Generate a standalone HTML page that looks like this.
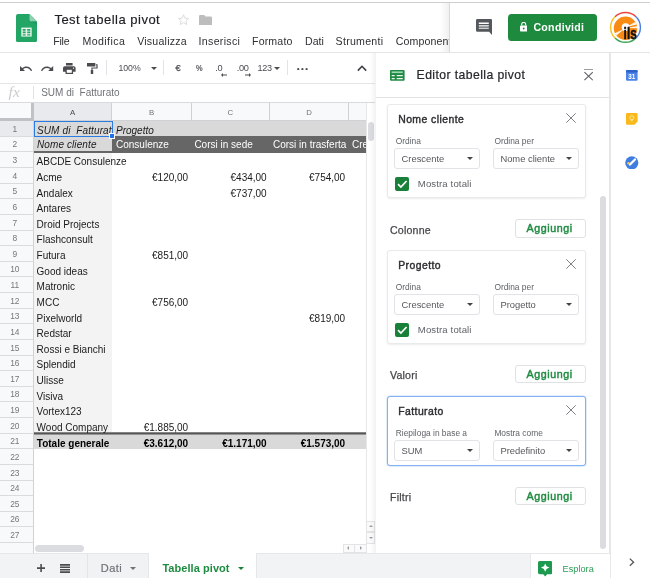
<!DOCTYPE html>
<html lang="it"><head><meta charset="utf-8"><title>Test tabella pivot</title>
<style>
*{box-sizing:border-box;margin:0;padding:0}
html,body{width:650px;height:578px;overflow:hidden;background:#fff}
body{position:relative;will-change:transform;font-family:"Liberation Sans",sans-serif;color:#202124;font-size:10px}
.abs,.rh,.ct,.ln{position:absolute}
.ln{background:#e3e4e6}
/* header */
#title{left:54.4px;top:12px;font-size:13px;line-height:16px;color:#202124;white-space:nowrap;letter-spacing:.5px;-webkit-text-stroke:.15px #202124}
.menu{top:34.6px;font-size:10.6px;line-height:12px;color:#2f3033;white-space:nowrap}
/* toolbar */
.tb{font-size:9px;line-height:10px;color:#4a4c50;white-space:nowrap}
/* grid */
.rh{left:0;width:33.5px;border-bottom:1px solid #d9dbde;border-right:1px solid #d0d2d5;color:#74777c;font-size:8.4px;text-align:center}
.rh span{position:absolute;left:0;right:2.8px;top:2.6px;line-height:10px}
.ch{top:103px;height:17.5px;background:#f8f9fa;border-right:1px solid #cfd1d4;border-bottom:1px solid #cfd1d4;color:#6f7277;font-size:7.8px;text-align:center;line-height:19.6px}
.ct{font-size:10px;line-height:13px;white-space:nowrap;color:#1a1a1a}
.ct.r{text-align:right}
.ct.i{font-style:italic}
.ct.b{font-weight:bold;color:#000}
.ct.w{color:#fff}
/* panel */
.card{left:387.4px;width:198.4px;height:93.6px;border:1px solid #e9eaec;border-radius:3px;background:#fff;box-shadow:0 1px 2px rgba(60,64,67,.10)}
.card b{position:absolute;left:9.8px;top:9px;font-size:10.4px;line-height:12px;color:#2c2d30;font-weight:normal;white-space:nowrap;letter-spacing:.45px;-webkit-text-stroke:.4px #2c2d30}
.lab{position:absolute;font-size:8.4px;line-height:10px;color:#5f6368;white-space:nowrap}
.sel{position:absolute;width:86.4px;height:21px;border:1px solid #e1e3e6;border-radius:3px;font-size:9.4px;line-height:19.6px;color:#55575b;padding-left:6.6px;white-space:nowrap}
.sel:after{content:"";position:absolute;right:6.4px;top:8px;border-left:3px solid transparent;border-right:3px solid transparent;border-top:3px solid #444}
.cb{position:absolute;left:6.4px;width:14.4px;height:14px;background:#188038;border-radius:2px}
.cbt{position:absolute;left:29.4px;font-size:9.6px;line-height:11px;color:#5f6368;white-space:nowrap;letter-spacing:.12px}
.x{position:absolute;right:9px;top:8.3px;width:10px;height:10px}
.sec{left:390px;font-size:10.6px;line-height:12px;color:#45474a;white-space:nowrap;letter-spacing:.2px;-webkit-text-stroke:.25px #45474a}
.add{left:515.2px;width:70.4px;height:18.6px;border:1px solid #dfe1e4;border-radius:3px;text-align:center;font-size:10.7px;line-height:17px;color:#1e8c40;font-weight:normal;letter-spacing:.55px;-webkit-text-stroke:.45px #1e8c40;white-space:nowrap;margin-top:-.5px;padding-right:1.6px}
</style></head><body>
<!-- top line -->
<div class="ln" style="left:0;top:2px;width:650px;height:1px;background:#cfcfcf"></div>
<!-- sheets logo -->
<svg class="abs" style="left:16px;top:13.8px" width="21" height="28.2" viewBox="0 0 21 28.2">
<path d="M2 0h11.5L21 7.5V26.2a2 2 0 0 1-2 2H2a2 2 0 0 1-2-2V2a2 2 0 0 1 2-2z" fill="#23a566"/>
<path d="M13.5 0L21 7.5h-5.5a2 2 0 0 1-2-2z" fill="#8ed1b1"/>
<path d="M21 7.5v4l-6-4.6z" fill="#1c8f55" opacity=".5"/>
<rect x="5.3" y="13.6" width="10.4" height="9" fill="#e6f4ec"/>
<path d="M6.7 15h3v1.7h-3zM11.2 15h3.1v1.7h-3.1zM6.7 17.6h3v1.7h-3zM11.2 17.6h3.1v1.7h-3.1zM6.7 20.2h3v1.3h-3zM11.2 20.2h3.1v1.3h-3.1z" fill="#23a566"/>
</svg>
<div id="title" class="abs">Test tabella pivot</div>
<!-- star -->
<svg class="abs" style="left:177.3px;top:12.6px" width="13" height="13" viewBox="0 0 24 24"><path d="M12 3.2l2.7 6.3 6.8.6-5.2 4.5 1.6 6.7L12 17.7l-5.9 3.6 1.6-6.7-5.2-4.5 6.8-.6z" fill="none" stroke="#dcdcdc" stroke-width="1.8" stroke-linejoin="round"/></svg>
<!-- folder -->
<svg class="abs" style="left:199px;top:14.6px" width="13" height="10.8" viewBox="0 0 13 10.8"><path d="M1.2 0h4l1.3 1.4h5.3a1.2 1.2 0 0 1 1.2 1.2v7a1.2 1.2 0 0 1-1.2 1.2H1.2A1.2 1.2 0 0 1 0 9.600V1.2A1.2 1.2 0 0 1 1.200 0z" fill="#bdbdbd"/></svg>
<div class="menu abs" style="left:53.2px;letter-spacing:-.22px">File</div>
<div class="menu abs" style="left:82.4px;letter-spacing:.42px">Modifica</div>
<div class="menu abs" style="left:137.2px;letter-spacing:.22px">Visualizza</div>
<div class="menu abs" style="left:198.6px;letter-spacing:.3px">Inserisci</div>
<div class="menu abs" style="left:252px;letter-spacing:.16px">Formato</div>
<div class="menu abs" style="left:305px">Dati</div>
<div class="menu abs" style="left:335.6px;letter-spacing:.27px">Strumenti</div>
<div class="menu abs" style="left:395.8px;width:53px;overflow:hidden;letter-spacing:.12px">Componenti aggiuntivi</div>
<!-- right header block -->
<div class="abs" style="left:440px;top:3px;width:9px;height:49px;background:linear-gradient(to right,rgba(0,0,0,0),rgba(0,0,0,.06))"></div>
<div class="abs" style="left:449px;top:3px;width:201px;height:49px;background:#fff;border-left:1px solid #dadada"></div>
<!-- comment icon -->
<svg class="abs" style="left:476px;top:19.200px" width="16.200" height="16.100" viewBox="0 0 16.200 15.400" preserveAspectRatio="none"><path d="M1.400 0h13.400a1.400 1.400 0 0 1 1.400 1.400V15.400l-3.100-3.100H1.400A1.400 1.400 0 0 1 0 10.900V1.400A1.400 1.400 0 0 1 1.400 0z" fill="#54575c"/><path d="M2.800 3.400h10v1.300h-10zM2.800 5.900h10v1.300h-10z" fill="#fff"/><path d="M2.800 8.200h10v1.400h-10z" fill="#cfd0d2"/></svg>
<!-- share -->
<div class="abs" style="left:508px;top:13.6px;width:89.4px;height:27.8px;background:#1d8a3e;border-radius:3.500px"></div>
<svg class="abs" style="left:519.600px;top:22.400px" width="7.400" height="9.600" viewBox="0 0 7.400 9.600"><path d="M1.700 3.600V2.400a2 2 0 0 1 4 0v1.200" fill="none" stroke="#fff" stroke-width="1.100"/><rect x="0" y="3.500" width="7.400" height="6" rx=".9" fill="#fff"/><circle cx="3.700" cy="6.500" r=".9" fill="#1d8a3e"/></svg>
<div class="abs" style="left:533.400px;top:21px;font-size:10.600px;line-height:13px;font-weight:bold;color:#fff;white-space:nowrap;letter-spacing:.3px">Condividi</div>
<!-- avatar -->
<svg class="abs" style="left:608.800px;top:11px" width="33" height="33" viewBox="0 0 33 33">
<defs><clipPath id="avc"><circle cx="16.500" cy="17.200" r="11.700"/></clipPath></defs>
<circle cx="16.500" cy="16.400" r="14.900" fill="#fff"/>
<path d="M5.960 5.860A14.900 14.900 0 0 1 27.040 5.860" fill="none" stroke="#e8453c" stroke-width="1.400"/>
<path d="M27.040 5.860A14.900 14.900 0 0 1 27.040 26.940" fill="none" stroke="#4a7fe0" stroke-width="1.400"/>
<path d="M27.040 26.940A14.900 14.900 0 0 1 5.960 26.940" fill="none" stroke="#3ea856" stroke-width="1.400"/>
<path d="M5.960 26.940A14.900 14.900 0 0 1 5.960 5.860" fill="none" stroke="#f6c026" stroke-width="1.400"/>
<circle cx="16.500" cy="17.200" r="11.700" fill="#f98b14"/>
<g clip-path="url(#avc)"><path d="M17 16l12-6.500 1.500 3.500zM17 17l13-2.200.3 2.500zM16 17.500L4 23l1.500 3z" fill="#fff" opacity=".9"/></g>
<circle cx="16.600" cy="16.200" r="3.900" fill="#fff"/>
<rect x="14" y="19" width="14" height="9.500" fill="#fff" opacity=".0"/>
<text x="14.600" y="27.900" font-family="Liberation Sans, sans-serif" font-weight="bold" font-size="17.400" fill="#111" stroke="#111" stroke-width=".5" textLength="13.200" lengthAdjust="spacingAndGlyphs">ils</text>
</svg>
<!-- header bottom line -->
<div class="ln" style="left:0;top:52px;width:650px;height:1px;background:#e4e5e7"></div>

<!-- toolbar icons -->
<svg class="abs" style="left:19.800px;top:65.600px" width="12.200" height="6.800" viewBox="0 0 12.200 6.800"><path d="M0 0v5h5L3.100 3.100C4 2.300 5.200 1.900 6.400 1.900c2.100 0 3.900 1.300 4.500 3.200l1.300-.4C11.400 2.200 9.100.500 6.400.500c-1.600 0-3.100.600-4.300 1.600z" fill="#4a4c50"/></svg>
<svg class="abs" style="left:41.400px;top:65.600px" width="12.200" height="6.800" viewBox="0 0 12.200 6.800"><path d="M12.200 0v5h-5l1.900-1.900C8.200 2.300 7 1.900 5.800 1.900c-2.100 0-3.900 1.300-4.500 3.200L0 4.700C.8 2.200 3.100.500 5.800.500c1.600 0 3.100.600 4.300 1.600z" fill="#4a4c50"/></svg>
<svg class="abs" style="left:63.400px;top:63.400px" width="12.600" height="11" viewBox="0 0 12.600 11"><path d="M3 0h6.600v2.400H3zM1.900 3.200h8.800a1.900 1.900 0 0 1 1.900 1.900v3.700h-2.500V11H2.500V8.800H0V5.100a1.900 1.900 0 0 1 1.900-1.900z" fill="#4a4c50"/><rect x="3.800" y="6.800" width="5" height="3" fill="#fff"/><circle cx="10.500" cy="5.200" r=".6" fill="#fff"/></svg>
<svg class="abs" style="left:87px;top:63.400px" width="10.600" height="11" viewBox="0 0 10.600 11"><path d="M0 0h8.300v3.600H0zM8.800 1.200h1.800v4.400H5.500v1.300h.7V11H3.800V6.900h.600V4.500h5V2.300h-.600z" fill="#4a4c50"/></svg>
<div class="ln" style="left:106.200px;top:60px;width:1px;height:15px;background:#e2e3e5"></div>
<div class="tb abs" style="left:118.400px;top:63px;font-size:8.700px">100%</div>
<div class="abs" style="left:150.600px;top:67px;border-left:3px solid transparent;border-right:3px solid transparent;border-top:3.400px solid #4a4c50"></div>
<div class="ln" style="left:163.200px;top:60px;width:1px;height:15px;background:#e2e3e5"></div>
<div class="tb abs" style="left:175.600px;top:63px;font-size:9.300px;color:#4a4c50;-webkit-text-stroke:.25px #4a4c50">€</div>
<div class="tb abs" style="left:196.200px;top:63px;font-size:8.400px;-webkit-text-stroke:.2px #4a4c50;transform:scaleX(.88);transform-origin:0 0">%</div>
<div class="tb abs" style="left:215.200px;top:63.400px;font-size:9.200px;letter-spacing:-.2px">.0</div>
<svg class="abs" style="left:221.400px;top:72.600px" width="6" height="4" viewBox="0 0 6 4"><path d="M0 2l2-2v1.400h4v1.200H2V4z" fill="#4a4c50"/></svg>
<div class="tb abs" style="left:236.800px;top:63.400px;font-size:9.200px;letter-spacing:-.35px">.00</div>
<svg class="abs" style="left:244.600px;top:72.600px" width="6" height="4" viewBox="0 0 6 4"><path d="M6 2L4 0v1.400H0v1.200h4V4z" fill="#4a4c50"/></svg>
<div class="tb abs" style="left:257.600px;top:63.400px;font-size:9.100px;letter-spacing:-.4px">123</div>
<div class="abs" style="left:273.600px;top:67.400px;border-left:3px solid transparent;border-right:3px solid transparent;border-top:3.400px solid #4a4c50"></div>
<div class="ln" style="left:287px;top:60px;width:1px;height:15px;background:#e2e3e5"></div>
<svg class="abs" style="left:297px;top:68px" width="11" height="2.400" viewBox="0 0 11 2.400"><circle cx="1.200" cy="1.200" r="1.100" fill="#4a4c50"/><circle cx="5.400" cy="1.200" r="1.100" fill="#4a4c50"/><circle cx="9.600" cy="1.200" r="1.100" fill="#4a4c50"/></svg>
<svg class="abs" style="left:356.600px;top:65.400px" width="10" height="6.400" viewBox="0 0 10 6.400"><path d="M.8 5.600L5 1.300l4.200 4.300" fill="none" stroke="#3c3e42" stroke-width="1.600"/></svg>
<!-- toolbar bottom line -->
<div class="ln" style="left:0;top:83px;width:375px;height:1px;background:#e4e5e7"></div>
<!-- formula bar -->
<div class="abs" style="left:8.600px;top:84px;font-family:'Liberation Serif',serif;font-style:italic;font-size:15.500px;line-height:16px;color:#c9cbce;letter-spacing:.2px">fx</div>
<div class="ln" style="left:33px;top:86px;width:1px;height:13px;background:#e0e1e3"></div>
<div class="abs" style="left:41.200px;top:87.400px;font-size:10px;line-height:12px;color:#707377;white-space:pre;letter-spacing:0">SUM di  Fatturato</div>
<div class="ln" style="left:0;top:101.500px;width:375px;height:1px;background:#d9dadc"></div>

<!-- column headers -->
<div class="abs" style="left:0;top:102.500px;width:366.500px;height:18px;background:#f8f9fa"></div>
<div class="abs" style="left:0;top:102.500px;width:33.800px;height:18.200px;background:#f9fafb;border-right:3px solid #bfc1c4;border-bottom:3px solid #bfc1c4"></div>
<div class="ch abs" style="left:33.600px;width:78.800px;background:#e8eaed;color:#4a4d51">A</div>
<div class="ch abs" style="left:112.400px;width:79.200px">B</div>
<div class="ch abs" style="left:191.600px;width:78.600px">C</div>
<div class="ch abs" style="left:270.200px;width:78.600px">D</div>
<div class="ch abs" style="left:348.800px;width:17.800px"></div>
<div class="abs" style="left:0;top:543px;width:33.500px;height:11px;background:#f8f9fa;border-right:1px solid #d0d2d5"></div>
<!-- cell fills -->
<div class="abs" style="left:33.600px;top:121px;width:333px;height:15.200px;background:#d9d9d9"></div>
<div class="abs" style="left:33.600px;top:136.200px;width:78.800px;height:16.800px;background:#d9d9d9"></div>
<div class="abs" style="left:112.400px;top:136.200px;width:254.200px;height:16.800px;background:#666"></div>
<div class="abs" style="left:33.600px;top:151px;width:78.800px;height:2px;background:#666"></div>
<div class="abs" style="left:33.600px;top:152.600px;width:78.800px;height:280px;background:#f3f3f3"></div>
<div class="abs" style="left:33.600px;top:432.200px;width:333px;height:16.800px;background:#d9d9d9"></div>
<div class="abs" style="left:33.600px;top:432px;width:333px;height:1px;background:#858585"></div>
<div class="abs" style="left:33.600px;top:433px;width:333px;height:1px;background:#555"></div>
<div class="abs" style="left:33.600px;top:434px;width:333px;height:1px;background:#949494"></div>
<!-- header texts -->
<div class="abs" style="left:34.600px;top:122px;width:77px;height:14px;overflow:hidden"><div class="ct i" style="left:2.400px;top:2px;letter-spacing:.12px;white-space:pre">SUM di  Fatturato</div></div>
<div class="ct i" style="left:116px;top:124px">Progetto</div>
<div class="ct i" style="left:37px;top:137.600px;letter-spacing:.1px">Nome cliente</div>
<div class="ct w" style="left:116px;top:137.600px">Consulenze</div>
<div class="ct w" style="left:194.400px;top:137.600px">Corsi in sede</div>
<div class="ct w" style="left:273px;top:137.600px">Corsi in trasferta</div>
<div class="abs" style="left:349px;top:136.600px;width:17.500px;height:14px;overflow:hidden"><div class="ct w" style="left:3px;top:1px">Crediti</div></div>
<div class="rh" style="top:121.20px;height:15.62px;background:#e8eaed"><span>1</span></div>
<div class="rh" style="top:136.82px;height:15.62px;background:#f8f9fa"><span>2</span></div>
<div class="rh" style="top:152.45px;height:15.62px;background:#f8f9fa"><span>3</span></div>
<div class="rh" style="top:168.07px;height:15.62px;background:#f8f9fa"><span>4</span></div>
<div class="rh" style="top:183.70px;height:15.62px;background:#f8f9fa"><span>5</span></div>
<div class="rh" style="top:199.32px;height:15.62px;background:#f8f9fa"><span>6</span></div>
<div class="rh" style="top:214.95px;height:15.62px;background:#f8f9fa"><span>7</span></div>
<div class="rh" style="top:230.57px;height:15.62px;background:#f8f9fa"><span>8</span></div>
<div class="rh" style="top:246.20px;height:15.62px;background:#f8f9fa"><span>9</span></div>
<div class="rh" style="top:261.82px;height:15.62px;background:#f8f9fa"><span>10</span></div>
<div class="rh" style="top:277.45px;height:15.62px;background:#f8f9fa"><span>11</span></div>
<div class="rh" style="top:293.07px;height:15.62px;background:#f8f9fa"><span>12</span></div>
<div class="rh" style="top:308.70px;height:15.62px;background:#f8f9fa"><span>13</span></div>
<div class="rh" style="top:324.32px;height:15.62px;background:#f8f9fa"><span>14</span></div>
<div class="rh" style="top:339.95px;height:15.62px;background:#f8f9fa"><span>15</span></div>
<div class="rh" style="top:355.57px;height:15.62px;background:#f8f9fa"><span>16</span></div>
<div class="rh" style="top:371.20px;height:15.62px;background:#f8f9fa"><span>17</span></div>
<div class="rh" style="top:386.82px;height:15.62px;background:#f8f9fa"><span>18</span></div>
<div class="rh" style="top:402.45px;height:15.62px;background:#f8f9fa"><span>19</span></div>
<div class="rh" style="top:418.07px;height:15.62px;background:#f8f9fa"><span>20</span></div>
<div class="rh" style="top:433.70px;height:15.62px;background:#f8f9fa"><span>21</span></div>
<div class="rh" style="top:449.32px;height:15.62px;background:#f8f9fa"><span>22</span></div>
<div class="rh" style="top:464.95px;height:15.62px;background:#f8f9fa"><span>23</span></div>
<div class="rh" style="top:480.57px;height:15.62px;background:#f8f9fa"><span>24</span></div>
<div class="rh" style="top:496.20px;height:15.62px;background:#f8f9fa"><span>25</span></div>
<div class="rh" style="top:511.82px;height:15.62px;background:#f8f9fa"><span>26</span></div>
<div class="rh" style="top:527.45px;height:15.62px;background:#f8f9fa"><span>27</span></div>
<div class="ct" style="left:36.6px;top:155.35px">ABCDE Consulenze</div>
<div class="ct" style="left:36.6px;top:170.97px">Acme</div>
<div class="ct" style="left:36.6px;top:186.60px">Andalex</div>
<div class="ct" style="left:36.6px;top:202.22px">Antares</div>
<div class="ct" style="left:36.6px;top:217.85px">Droid Projects</div>
<div class="ct" style="left:36.6px;top:233.47px">Flashconsult</div>
<div class="ct" style="left:36.6px;top:249.10px">Futura</div>
<div class="ct" style="left:36.6px;top:264.72px">Good ideas</div>
<div class="ct" style="left:36.6px;top:280.35px">Matronic</div>
<div class="ct" style="left:36.6px;top:295.97px">MCC</div>
<div class="ct" style="left:36.6px;top:311.60px">Pixelworld</div>
<div class="ct" style="left:36.6px;top:327.22px">Redstar</div>
<div class="ct" style="left:36.6px;top:342.85px">Rossi e Bianchi</div>
<div class="ct" style="left:36.6px;top:358.47px">Splendid</div>
<div class="ct" style="left:36.6px;top:374.10px">Ulisse</div>
<div class="ct" style="left:36.6px;top:389.72px">Visiva</div>
<div class="ct" style="left:36.6px;top:405.35px">Vortex123</div>
<div class="ct" style="left:36.6px;top:420.97px">Wood Company</div>
<div class="ct r" style="left:118.2px;width:70px;top:170.97px">€120,00</div>
<div class="ct r" style="left:196.7px;width:70px;top:170.97px">€434,00</div>
<div class="ct r" style="left:275.2px;width:70px;top:170.97px">€754,00</div>
<div class="ct r" style="left:196.7px;width:70px;top:186.60px">€737,00</div>
<div class="ct r" style="left:118.2px;width:70px;top:249.10px">€851,00</div>
<div class="ct r" style="left:118.2px;width:70px;top:295.97px">€756,00</div>
<div class="ct r" style="left:275.2px;width:70px;top:311.60px">€819,00</div>
<div class="ct r" style="left:118.2px;width:70px;top:420.97px">€1.885,00</div>
<!-- totals -->
<div class="ct b" style="left:36.800px;top:436.800px">Totale generale</div>
<div class="ct b r" style="left:118.200px;width:70px;top:436.800px">€3.612,00</div>
<div class="ct b r" style="left:196.700px;width:70px;top:436.800px">€1.171,00</div>
<div class="ct b r" style="left:275.200px;width:70px;top:436.800px">€1.573,00</div>
<!-- selection -->
<div class="abs" style="left:34px;top:120.800px;width:78.800px;height:16.400px;border:1.400px solid #2a7be4"></div>
<div class="abs" style="left:109px;top:133.400px;width:5.600px;height:5.600px;background:#1a73e8;border:1px solid #fff;box-sizing:border-box"></div>
<!-- grid right edge + scrollbars -->
<div class="ln" style="left:366.400px;top:102.500px;width:1px;height:451px;background:#e6e7e9"></div>
<div class="abs" style="left:368.400px;top:122.400px;width:5.800px;height:18.600px;border-radius:3px;background:#dadce0"></div>
<div class="abs" style="left:35px;top:545px;width:48.600px;height:7px;border-radius:3.500px;background:#dadce0"></div>
<!-- scroll buttons -->
<div class="abs" style="left:366.400px;top:520.500px;width:9px;height:11.800px;border:1px solid #e3e4e6;background:#fafafa"></div>
<div class="abs" style="left:366.400px;top:531.800px;width:9px;height:12px;border:1px solid #e3e4e6;background:#fafafa"></div>
<div class="abs" style="left:368.700px;top:524.600px;border-left:2.200px solid transparent;border-right:2.200px solid transparent;border-bottom:2.600px solid #9a9da1"></div>
<div class="abs" style="left:368.700px;top:536.600px;border-left:2.200px solid transparent;border-right:2.200px solid transparent;border-top:2.600px solid #9a9da1"></div>
<div class="abs" style="left:342.700px;top:543.800px;width:12.700px;height:9.500px;border:1px solid #e3e4e6;background:#fafafa"></div>
<div class="abs" style="left:354.400px;top:543.800px;width:12.400px;height:9.500px;border:1px solid #e3e4e6;background:#fafafa"></div>
<div class="abs" style="left:347.400px;top:546.400px;border-top:2.200px solid transparent;border-bottom:2.200px solid transparent;border-right:2.600px solid #9a9da1"></div>
<div class="abs" style="left:359.600px;top:546.400px;border-top:2.200px solid transparent;border-bottom:2.200px solid transparent;border-left:2.600px solid #9a9da1"></div>

<!-- bottom bar -->
<div class="abs" style="left:0;top:553.200px;width:530px;height:25px;background:#f1f3f4;border-top:1px solid #e6e7e9"></div>
<svg class="abs" style="left:37.200px;top:563.800px" width="8.200" height="8.200" viewBox="0 0 8.200 8.200"><path d="M4.100 0v8.200M0 4.100h8.200" stroke="#4a4c50" stroke-width="1.600"/></svg>
<svg class="abs" style="left:60.400px;top:563.800px" width="10" height="9" viewBox="0 0 10 9"><path d="M0 .9h10M0 3.300h10M0 5.700h10M0 8.100h10" stroke="#4a4c50" stroke-width="1.600"/></svg>
<div class="abs" style="left:87.400px;top:554px;width:61px;height:24px;background:#f0f2f3;border-left:1px solid #e4e5e7"></div>
<div class="abs" style="left:100.800px;top:562px;font-size:11px;line-height:13px;color:#6f7277;letter-spacing:.43px;white-space:nowrap;-webkit-text-stroke:.2px #6f7277">Dati</div>
<div class="abs" style="left:130.200px;top:566.800px;border-left:3px solid transparent;border-right:3px solid transparent;border-top:3.200px solid #6f7277"></div>
<div class="abs" style="left:148.400px;top:553.200px;width:108.600px;height:25px;background:#fff;border-left:1px solid #e6e7e9;border-right:1px solid #e6e7e9"></div>
<div class="abs" style="left:162.400px;top:562px;font-size:11px;line-height:13px;color:#1e8c40;font-weight:bold;white-space:nowrap;letter-spacing:.06px">Tabella pivot</div>
<div class="abs" style="left:237.600px;top:567px;border-left:3px solid transparent;border-right:3px solid transparent;border-top:3.200px solid #188038"></div>
<!-- Esplora -->
<div class="abs" style="left:529.800px;top:553.200px;width:80px;height:25px;background:#fff;border-top:1px solid #e6e7e9;border-left:1px solid #e6e7e9"></div>
<svg class="abs" style="left:538px;top:561px" width="14.400" height="15.600" viewBox="0 0 14.400 15.600"><path d="M1.600 0h11.200a1.600 1.600 0 0 1 1.600 1.600v10a1.600 1.600 0 0 1-1.600 1.600H9.200l-2 2.400-2-2.400H1.600A1.600 1.600 0 0 1 0 11.600v-10A1.600 1.600 0 0 1 1.600 0z" fill="#1e9a50"/><path d="M7.200 2.400l1.300 2.900 2.900 1.300-2.900 1.300-1.300 2.900-1.300-2.900L3 6.600l2.900-1.300z" fill="#fff"/></svg>
<div class="abs" style="left:562.600px;top:563px;font-size:9.200px;line-height:12px;color:#2e9a58;white-space:nowrap">Esplora</div>

<!-- side panel -->
<div class="abs" style="left:369.500px;top:53px;width:6px;height:500px;background:linear-gradient(to right,rgba(0,0,0,0),rgba(0,0,0,.05))"></div>
<div class="abs" style="left:375.500px;top:53px;width:234.500px;height:500.200px;background:#fff;border-right:1px solid #e4e5e7"></div>
<!-- cards (scroll content) -->
<div class="card abs" style="top:104px"><b>Nome cliente</b>
<svg class="x" viewBox="0 0 10 10"><path d="M.3.300l9.400 9.400M9.700.300L.3 9.700" stroke="#7d8085" stroke-width="1"/></svg>
<span class="lab" style="left:7.4px;top:30.800px">Ordina</span><span class="lab" style="left:106px;top:30.800px">Ordina per</span>
<div class="sel" style="left:5.600px;top:43.300px">Crescente</div><div class="sel" style="left:104.400px;top:43.300px">Nome cliente</div>
<div class="cb" style="top:72px"><svg width="14.400" height="14" viewBox="0 0 14.400 14"><path d="M3 7.200l2.900 2.900L11.600 4" fill="none" stroke="#fff" stroke-width="1.700"/></svg></div><span class="cbt" style="top:72.800px">Mostra totali</span>
</div>
<div class="sec abs" style="top:223.900px">Colonne</div>
<div class="add abs" style="top:219.500px">Aggiungi</div>
<div class="card abs" style="top:250px"><b>Progetto</b>
<svg class="x" viewBox="0 0 10 10"><path d="M.3.300l9.400 9.400M9.700.300L.3 9.700" stroke="#7d8085" stroke-width="1"/></svg>
<span class="lab" style="left:7.4px;top:30.800px">Ordina</span><span class="lab" style="left:106px;top:30.800px">Ordina per</span>
<div class="sel" style="left:5.600px;top:43.300px">Crescente</div><div class="sel" style="left:104.400px;top:43.300px">Progetto</div>
<div class="cb" style="top:72px"><svg width="14.400" height="14" viewBox="0 0 14.400 14"><path d="M3 7.200l2.900 2.900L11.600 4" fill="none" stroke="#fff" stroke-width="1.700"/></svg></div><span class="cbt" style="top:72.800px">Mostra totali</span>
</div>
<div class="sec abs" style="top:369.400px">Valori</div>
<div class="add abs" style="top:365.400px">Aggiungi</div>
<div class="card abs" style="top:396px;height:69.800px;border-color:#85b0f2;box-shadow:0 0 0 .5px #c4d9f8"><b>Fatturato</b>
<svg class="x" viewBox="0 0 10 10"><path d="M.3.300l9.400 9.400M9.700.300L.3 9.700" stroke="#7d8085" stroke-width="1"/></svg>
<span class="lab" style="left:7.4px;top:30.800px">Riepiloga in base a</span><span class="lab" style="left:106px;top:30.800px">Mostra come</span>
<div class="sel" style="left:5.600px;top:43.300px">SUM</div><div class="sel" style="left:104.400px;top:43.300px">Predefinito</div>
</div>
<div class="sec abs" style="top:491.300px">Filtri</div>
<div class="add abs" style="top:487.300px">Aggiungi</div>
<!-- panel scrollbar -->
<div class="abs" style="left:600.400px;top:196px;width:6px;height:353px;border-radius:3px;background:#dadce0"></div>
<!-- panel header (covers scrolled content) -->
<div class="abs" style="left:376px;top:53px;width:233px;height:44.500px;background:#fff;border-bottom:1px solid #e1e2e4"></div>
<svg class="abs" style="left:390.200px;top:69.800px" width="14.600" height="10.800" viewBox="0 0 14.600 10.800"><rect width="14.600" height="10.800" rx="1" fill="#1f8a44"/><rect x="1.600" y="1.400" width="11.200" height="1.700" fill="#9ad8b0"/><path d="M1.700 4.900h3v1.300h-3zM6.700 4.900h6.100v1.300H6.700zM1.700 7.900h3v1.300h-3zM6.700 7.900h6.100v1.300H6.700z" fill="#e9f7ee"/></svg>
<div class="abs" style="left:416.600px;top:68.400px;font-size:12.200px;line-height:14px;color:#26272a;white-space:nowrap;letter-spacing:.42px;-webkit-text-stroke:.22px #2a2b2e">Editor tabella pivot</div>
<svg class="abs" style="left:584px;top:69px" width="9.400" height="11.600" viewBox="0 0 9.400 11.600"><path d="M0 .5h9.400" stroke="#9a9da1" stroke-width="1"/><path d="M.4 3.200l8.400 8M8.800 3.200l-8.400 8" stroke="#5c5f63" stroke-width="1.100"/></svg>

<!-- right rail -->
<div class="ln" style="left:609.500px;top:53px;width:1px;height:525px;background:#e6e7e9"></div>
<svg class="abs" style="left:626.400px;top:70.200px" width="11.600" height="10.800" viewBox="0 0 11.600 10.800"><rect width="11.600" height="10.800" rx="1.200" fill="#4b83e6"/><rect width="11.600" height="2.600" rx="1" fill="#2d62c9"/><text x="5.800" y="8.800" text-anchor="middle" font-family="Liberation Sans, sans-serif" font-size="6.400" font-weight="bold" fill="#fff">31</text></svg>
<svg class="abs" style="left:626.400px;top:113px" width="11.600" height="11.800" viewBox="0 0 11.600 11.800"><path d="M1.200 0h9.200a1.200 1.200 0 0 1 1.200 1.200v7.400l-3.200 3.200H1.200A1.200 1.200 0 0 1 0 10.600V1.200A1.200 1.200 0 0 1 1.200 0z" fill="#f9b91b"/><circle cx="5.800" cy="4.800" r="2" fill="none" stroke="#fdeab0" stroke-width=".9"/><path d="M4.800 7.800h2" stroke="#fdeab0" stroke-width=".9"/></svg>
<svg class="abs" style="left:625.400px;top:155.800px" width="13.600" height="13.600" viewBox="0 0 13.600 13.600"><circle cx="6.800" cy="6.800" r="6.600" fill="#3f7de0"/><path d="M5 8.600l5-5.200" stroke="#fff" stroke-width="2.200" stroke-linecap="round"/><circle cx="3.600" cy="7.200" r="1.300" fill="#f7cb4d"/></svg>
<svg class="abs" style="left:629px;top:558.400px" width="6" height="8.400" viewBox="0 0 6 8.400"><path d="M.8.600l3.800 3.600L.8 7.800" fill="none" stroke="#55585c" stroke-width="1.300"/></svg>

</body></html>
